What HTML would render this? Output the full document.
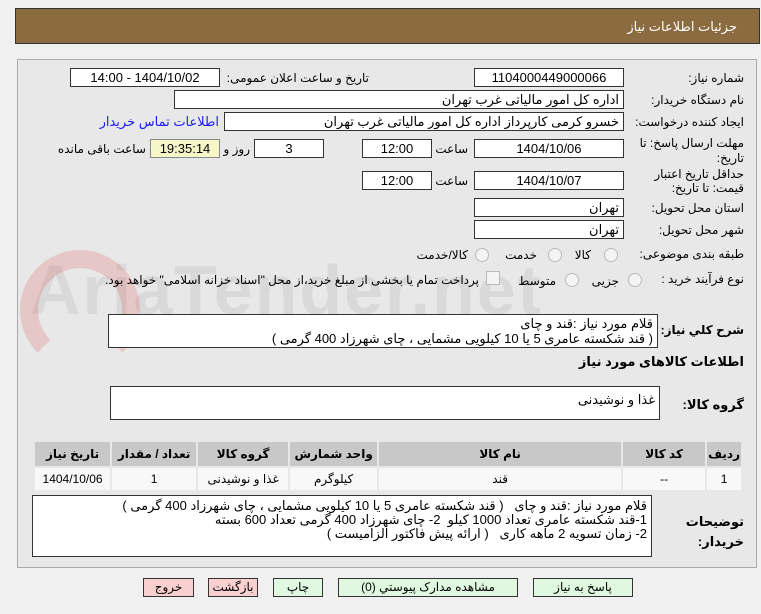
<!DOCTYPE html>
<html><head><meta charset="utf-8"><style>
body{margin:0;width:761px;height:614px;background:#f0f0f0;font-family:"Liberation Sans","DejaVu Sans",sans-serif;font-size:12px;color:#000;position:relative;overflow:hidden}
.a{position:absolute;white-space:nowrap}
.hdr{left:15px;top:8px;width:745px;height:36px;background:#8b6b40;border:1px solid #333;box-sizing:border-box}
.hdr span{position:absolute;right:22px;top:10px;color:#fff;font-size:13px}
.panel{left:17px;top:59px;width:740px;height:509px;border:1px solid #aaa;background:#e8e8e8;box-sizing:border-box}
.f{position:absolute;background:#fff;border:1px solid #333;box-sizing:border-box;height:19px;line-height:17px;font-size:13px;direction:rtl;padding:0 4px;white-space:nowrap;overflow:hidden}
.c{text-align:center}
.l{position:absolute;direction:rtl;white-space:nowrap;font-size:12px}
.rad{position:absolute;width:12px;height:12px;border-radius:50%;border:1px solid #bbb;background:#f4f4f4}
table{position:absolute;left:33px;top:440px;width:710px;border-collapse:separate;border-spacing:2px;direction:rtl;font-size:12px}
th{background:#c8c8c8;height:22px;font-weight:bold}
td{background:#f8f8f8;height:20px;text-align:center}
.b{position:absolute;top:578px;height:19px;border:1px solid #333;box-sizing:border-box;text-align:center;line-height:17px;font-size:12px}
</style></head><body>
<div class="a hdr"><span>جزئیات اطلاعات نیاز</span></div>
<div class="a panel"></div>
<div class="a" style="left:30px;top:250px;font-size:70px;font-weight:bold;color:rgba(200,200,200,.45);letter-spacing:2px">AriaTender.net</div>
<div class="a" style="left:20px;top:250px;width:120px;height:120px;border:18px solid rgba(220,100,100,.25);border-radius:50%;box-sizing:border-box;border-bottom-color:transparent"></div>

<div class="l" style="right:17px;top:71px">شماره نیاز:</div>
<div class="f c" style="left:474px;top:68px;width:150px">1104000449000066</div>
<div class="l" style="right:392px;top:71px">تاریخ و ساعت اعلان عمومی:</div>
<div class="f c" style="left:70px;top:68px;width:150px">1404/10/02 - 14:00</div>

<div class="l" style="right:17px;top:93px">نام دستگاه خریدار:</div>
<div class="f" style="left:174px;top:90px;width:450px">اداره کل امور مالیاتی غرب تهران</div>

<div class="l" style="right:17px;top:115px">ایجاد کننده درخواست:</div>
<div class="f" style="left:224px;top:112px;width:400px">خسرو کرمی کارپرداز اداره کل امور مالیاتی غرب تهران</div>
<div class="l" style="right:542px;top:114px;color:#1a1aff;font-size:13px">اطلاعات تماس خریدار</div>

<div class="l" style="right:17px;top:136px;line-height:15px">مهلت ارسال پاسخ: تا<br>تاریخ:</div>
<div class="f c" style="left:474px;top:139px;width:150px">1404/10/06</div>
<div class="l" style="right:293px;top:142px">ساعت</div>
<div class="f c" style="left:362px;top:139px;width:70px">12:00</div>
<div class="f c" style="left:254px;top:139px;width:70px">3</div>
<div class="l" style="right:511px;top:142px">روز و</div>
<div class="f c" style="left:150px;top:139px;width:70px;background:#f6f6c8;border-color:#888">19:35:14</div>
<div class="l" style="right:615px;top:142px">ساعت باقی مانده</div>

<div class="l" style="right:17px;top:167px;line-height:14px">حداقل تاریخ اعتبار<br>قیمت: تا تاریخ:</div>
<div class="f c" style="left:474px;top:171px;width:150px">1404/10/07</div>
<div class="l" style="right:293px;top:174px">ساعت</div>
<div class="f c" style="left:362px;top:171px;width:70px">12:00</div>

<div class="l" style="right:17px;top:201px">استان محل تحویل:</div>
<div class="f" style="left:474px;top:198px;width:150px">تهران</div>
<div class="l" style="right:17px;top:223px">شهر محل تحویل:</div>
<div class="f" style="left:474px;top:220px;width:150px">تهران</div>

<div class="l" style="right:17px;top:247px">طبقه بندی موضوعی:</div>
<div class="rad" style="left:604px;top:248px"></div><div class="l" style="right:170px;top:248px">کالا</div>
<div class="rad" style="left:548px;top:248px"></div><div class="l" style="right:224px;top:248px">خدمت</div>
<div class="rad" style="left:475px;top:248px"></div><div class="l" style="right:293px;top:248px">کالا/خدمت</div>

<div class="l" style="right:17px;top:272px">نوع فرآیند خرید :</div>
<div class="rad" style="left:628px;top:273px"></div><div class="l" style="right:142px;top:274px">جزیی</div>
<div class="rad" style="left:565px;top:273px"></div><div class="l" style="right:205px;top:274px">متوسط</div>
<div class="a" style="left:486px;top:271px;width:12px;height:12px;border:1px solid #bbb;background:#f4f4f4"></div>
<div class="l" style="right:282px;top:273px">پرداخت تمام یا بخشی از مبلغ خرید،از محل "اسناد خزانه اسلامی" خواهد بود.</div>

<div class="l" style="right:17px;top:323px;font-weight:bold;font-size:12px">شرح كلي نیاز:</div>
<div class="f" style="left:108px;top:314px;width:550px;height:34px;line-height:15px;white-space:normal;padding-top:1px">قلام مورد نیاز :قند و چای<br>( قند شکسته عامری 5 یا 10 کیلویی مشمایی ، چای شهرزاد 400 گرمی )</div>
<div class="l" style="right:17px;top:354px;font-weight:bold;font-size:13px">اطلاعات كالاهای مورد نیاز</div>
<div class="l" style="right:17px;top:397px;font-weight:bold;font-size:13px">گروه کالا:</div>
<div class="f" style="left:110px;top:386px;width:550px;height:34px;padding-top:4px">غذا و نوشیدنی</div>

<table><tr><th style="width:25px">ردیف</th><th style="width:80px">کد کالا</th><th style="width:240px">نام کالا</th><th style="width:85px">واحد شمارش</th><th style="width:88px">گروه کالا</th><th style="width:82px">تعداد / مقدار</th><th>تاریخ نیاز</th></tr>
<tr><td>1</td><td>--</td><td>قند</td><td>کیلوگرم</td><td>غذا و نوشیدنی</td><td>1</td><td>1404/10/06</td></tr></table>

<div class="l" style="right:17px;top:512px;font-weight:bold;line-height:20px;font-size:13px">توضیحات<br>خریدار:</div>
<div class="f" style="left:32px;top:495px;width:620px;height:62px;line-height:14px;white-space:normal;padding-top:3px">قلام مورد نیاز :قند و چای &nbsp; ( قند شکسته عامری 5 یا 10 کیلویی مشمایی ، چای شهرزاد 400 گرمی )<br>1-قند شکسته عامری تعداد 1000 کیلو &nbsp;2- چای شهرزاد 400 گرمی تعداد 600 بسته<br>2- زمان تسویه 2 ماهه کاری &nbsp; ( ارائه پیش فاکتور الزامیست )</div>

<div class="b" style="left:143px;width:51px;background:#f8d0d0">خروج</div>
<div class="b" style="left:208px;width:50px;background:#f8d0d0">بازگشت</div>
<div class="b" style="left:273px;width:50px;background:#dff8df">چاپ</div>
<div class="b" style="left:338px;width:180px;background:#dff8df">مشاهده مدارک پیوستي (0)</div>
<div class="b" style="left:533px;width:100px;background:#dff8df">پاسخ به نیاز</div>
</body></html>
